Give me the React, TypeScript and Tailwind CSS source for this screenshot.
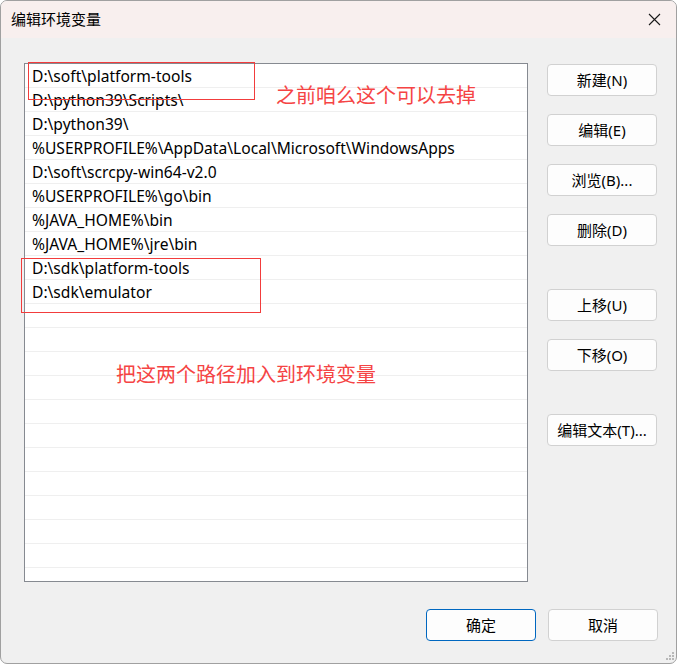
import React from "react";

const PATHS = [
  "D:\\soft\\platform-tools",
  "D:\\python39\\Scripts\\",
  "D:\\python39\\",
  "%USERPROFILE%\\AppData\\Local\\Microsoft\\WindowsApps",
  "D:\\soft\\scrcpy-win64-v2.0",
  "%USERPROFILE%\\go\\bin",
  "%JAVA_HOME%\\bin",
  "%JAVA_HOME%\\jre\\bin",
  "D:\\sdk\\platform-tools",
  "D:\\sdk\\emulator",
];

const ROWS = [...PATHS, ...Array(12).fill("")];

const FONT = { fontFamily: '"Noto Sans", "Noto Sans CJK SC", sans-serif' };

function Btn({ label, primary }: { label: string; primary?: boolean }) {
  return (
    <button
      className={
        "w-[110px] h-[32px] rounded-[4px] bg-[#fdfdfd] text-[15px] text-black leading-none pt-[1px] " +
        (primary ? "border border-[#0067c0]" : "border border-[#d1d1d1]")
      }
    >
      {label}
    </button>
  );
}

export default function App() {
  return (
    <div style={FONT} className="w-[677px] h-[664px] bg-[#f0f0f0] relative overflow-hidden rounded-[7px] border border-[#a0a0a0] flex flex-col">
      <div className="h-[37px] shrink-0 bg-[#f8efee] flex items-center justify-between pl-[10px] pr-[14px]">
        <span className="text-[15px] text-black">编辑环境变量</span>
        <svg width="13" height="13" viewBox="0 0 13 13" className="mr-[1px]">
          <path d="M1 1 L12 12 M12 1 L1 12" stroke="#1a1a1a" strokeWidth="1.1" />
        </svg>
      </div>

      <div className="flex pl-[23px] pt-[25px] gap-[19px]">
        <div className="w-[504px] h-[519px] bg-white border border-[#868a91] overflow-hidden">
          {ROWS.map((p, i) => (
            <div key={i} className="h-[24px] border-b border-[#efefef] pl-[7px] pt-[3px] flex items-center text-[15.6px] text-black whitespace-nowrap">
              {p}
            </div>
          ))}
        </div>
        <div className="flex flex-col pt-[1px]">
          <div className="flex flex-col gap-[18px]">
            <Btn label="新建(N)" />
            <Btn label="编辑(E)" />
            <Btn label="浏览(B)..." />
            <Btn label="删除(D)" />
          </div>
          <div className="flex flex-col gap-[18px] mt-[43px]">
            <Btn label="上移(U)" />
            <Btn label="下移(O)" />
          </div>
          <div className="mt-[43px]">
            <Btn label="编辑文本(T)..." />
          </div>
        </div>
      </div>

      <div className="flex justify-end gap-[12px] pr-[18px] mt-[27px]">
        <Btn label="确定" primary />
        <Btn label="取消" />
      </div>

      {/* annotations */}
      <div className="absolute left-[27px] top-[61px] w-[227px] h-[38px] border border-[#f23c3c]" />
      <div className="absolute left-[20px] top-[257px] w-[240px] h-[55px] border border-[#f23c3c]" />
      <div className="absolute left-[275px] top-[80px] text-[20px] leading-[28px] text-[#f54444]" style={{ fontFamily: '"Noto Sans CJK SC", sans-serif' }}>
        之前咱么这个可以去掉
      </div>
      <div className="absolute left-[115px] top-[359px] text-[20px] leading-[28px] text-[#f54444]" style={{ fontFamily: '"Noto Sans CJK SC", sans-serif' }}>
        把这两个路径加入到环境变量
      </div>

      <svg className="absolute right-[2px] bottom-[2px]" width="10" height="10" viewBox="0 0 10 10">
        {[
          [8, 0], [8, 3], [5, 3], [8, 6], [5, 6], [2, 6],
        ].map(([x, y], i) => (
          <rect key={i} x={x} y={y + 1} width="2" height="2" fill="#b8b8b8" />
        ))}
      </svg>
    </div>
  );
}
